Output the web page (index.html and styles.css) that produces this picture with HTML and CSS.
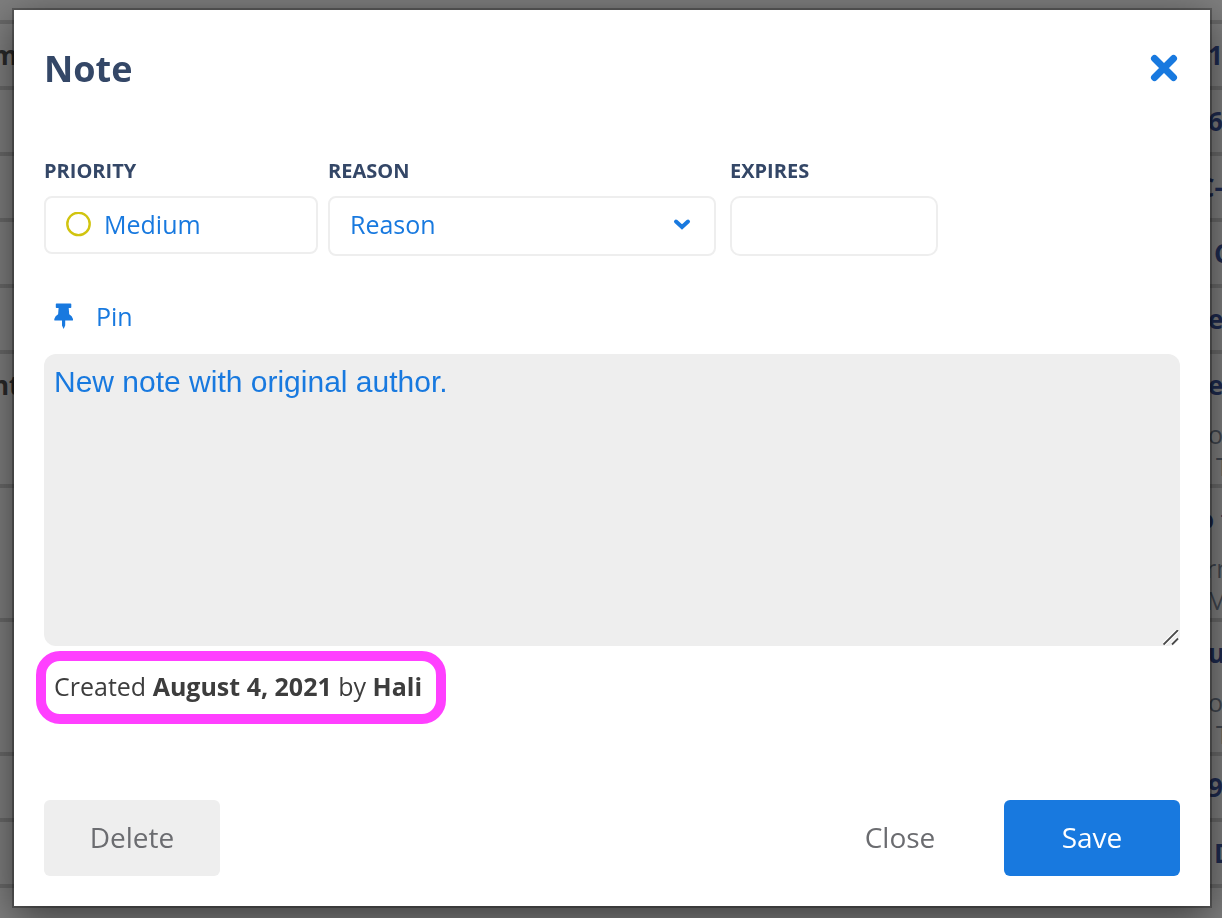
FILE: index.html
```html
<!DOCTYPE html>
<html lang="en">
<head>
<meta charset="utf-8">
<meta name="viewport" content="width=device-width, initial-scale=1">
<title>Note</title>
<link rel="stylesheet" href="styles.css">
</head>
<body>
<div class="backdrop-page" aria-hidden="true">
  <div class="row"><span class="row-label">m</span><div class="row-value near"><b>1</b></div></div>
  <div class="row"><div class="row-value near"><b>6</b></div></div>
  <div class="row"><div class="row-value"><b>C-</b></div></div>
  <div class="row"><div class="row-value far"><b>C</b></div></div>
  <div class="row"><div class="row-value near"><b>e</b></div></div>
  <div class="row tall"><span class="row-label">nt</span><div class="row-value near"><b>e</b><span>ou</span><span class="inset">T</span></div></div>
  <div class="row tall"><div class="row-value"><b>o t</b><span class="inset">rn</span><span class="inset">M</span></div></div>
  <div class="row tall"><div class="row-value near"><b>us</b><span>ou</span><span class="inset">T</span></div></div>
  <div class="row"><div class="row-value near"><b>9</b></div></div>
  <div class="row"><div class="row-value far"><b>D</b></div></div>
  <div class="row"></div>
</div>
<div class="overlay">
  <form class="modal" role="dialog" aria-labelledby="title">
    <header class="modal-header">
      <h1 class="title" id="title">Note</h1>
      <button class="icon-button" type="button" aria-label="Close dialog">
        <svg width="32" height="32" viewBox="0 0 32 32"><path d="M6.500 5.500 25.500 24.500M25.500 5.500 6.500 24.500" fill="none" stroke="currentColor" stroke-width="7" stroke-linecap="round"/></svg>
      </button>
    </header>
    <div class="fields">
      <div class="field priority">
        <label for="priority">PRIORITY</label>
        <button class="control priority-button" id="priority" type="button"><svg width="25" height="25" viewBox="0 0 25 25"><circle cx="12.500" cy="11.900" r="11.200" fill="none" stroke="#d1c40f" stroke-width="2.400"/></svg>Medium</button>
      </div>
      <div class="field reason">
        <label for="reason">REASON</label>
        <div class="select-wrap">
          <select class="control reason-select" id="reason"><option>Reason</option></select>
          <svg class="chevron" width="20" height="14" viewBox="0 0 20 14"><path d="M4 4.500 10 10 16 4.500" fill="none" stroke="currentColor" stroke-width="4" stroke-linecap="round"/></svg>
        </div>
      </div>
      <div class="field expires">
        <label for="expires">EXPIRES</label>
        <input class="control expires-input" id="expires" type="text">
      </div>
    </div>
    <button class="pin" type="button">
      <svg width="20" height="26" viewBox="0 0 20 26"><path d="M2.500 0.500H16.500Q17.300 .5 17.300 1.300V4.200Q17.300 5 16.500 5H14.700L15.200 11.200Q18.200 12.800 19 16V17Q19 17.600 18.300 17.600H11.200V22.500L9.600 26 8 22.500V17.600H1Q.3 17.600 .3 17V16Q1.100 12.800 4.100 11.200L4.600 5H2.500Q1.800 5 1.800 4.200V1.300Q1.800 .5 2.500 .5Z" fill="currentColor"/></svg>
      Pin
    </button>
    <div class="note-wrap">
      <textarea class="note" aria-label="Note text">New note with original author.</textarea>
      <svg class="grip" width="16" height="16" viewBox="0 0 16 16"><path d="M0.500 14.500 15 0M9 14.500 15 8.500" fill="none" stroke="#fff" stroke-width="4"/><path d="M0.500 14.500 15 0M9 14.500 15 8.500" fill="none" stroke="#4a4a4a" stroke-width="1.800"/></svg>
    </div>
    <p class="created">Created <strong>August 4, 2021</strong> by <strong>Hali</strong></p>
    <footer class="actions">
      <button class="button delete" type="button">Delete</button>
      <button class="button close" type="button">Close</button>
      <button class="button save" type="submit">Save</button>
    </footer>
  </form>
</div>
</body>
</html>
```
FILE: styles.css
```css
* { box-sizing: border-box; }
body {
  margin: 0;
  overflow: hidden;
  background: #7f7f7f;
  font-family: "Open Sans", sans-serif;
  font-size: 25px;
  color: #3d3d3d;
}
button, input, select { font: inherit; margin: 0; }
button, select { cursor: pointer; }

.backdrop-page { padding-top: 20px; }
.row {
  display: flex;
  height: 66px;
  border-top: 4px solid #6a6a6a;
  padding-top: 12px;
  line-height: 38px;
  font-size: 26px;
}
.row.tall { height: 134px; }
.row-label { margin-left: -8px; font-weight: 700; color: #2a2a2a; }
.row-value {
  display: flex;
  flex-direction: column;
  margin-left: auto;
  width: 24px;
  white-space: nowrap;
  line-height: 32px;
  font-size: 25px;
  color: #40464f;
}
.row-value b { line-height: 38px; font-size: 26px; color: #1e2b50; margin-bottom: 14px; }
.row-value.near { width: 14px; }
.row-value.far { width: 8px; }
.inset { padding-left: 8px; }

.overlay {
  position: fixed;
  inset: 0;
  display: flex;
  padding: 10px 12px 12px 14px;
}
.modal {
  flex: 1;
  display: flex;
  flex-direction: column;
  padding: 30px;
  background: #fff;
  box-shadow: 0 0 0 2px rgba(0, 0, 0, .28), 0 10px 40px rgba(0, 0, 0, .55);
}
.modal-header {
  display: flex;
  justify-content: space-between;
  align-items: center;
  height: 58px;
}
.title { margin: 0; font-size: 36px; line-height: 58px; font-weight: 700; color: #344767; }
.icon-button {
  display: flex;
  padding: 0;
  border: 0;
  background: none;
  color: #1879df;
}
.fields { display: flex; margin-top: 58px; }
.field { display: flex; flex-direction: column; }
.field label { margin-bottom: 10px; font-size: 20px; line-height: 30px; font-weight: 700; color: #344767; }
.priority { flex: 0 1 274px; margin-right: 10px; }
.reason { flex: 0 1 388px; margin-right: 14px; }
.expires { flex: 0 1 208px; }
.control {
  width: 100%;
  height: 60px;
  border: 2px solid #eee;
  border-radius: 8px;
  background: #fff;
  color: #1879df;
}
.priority-button { display: flex; align-items: center; gap: 13px; height: 58px; padding: 0 20px 2px; }
.select-wrap { position: relative; }
.reason-select { padding: 0 60px 4px 20px; appearance: none; }
.chevron { position: absolute; right: 24px; top: 21px; color: #1879df; pointer-events: none; }
.expires-input { border-radius: 10px; padding: 0 16px; }
.pin {
  display: flex;
  align-items: center;
  align-self: flex-start;
  gap: 22px;
  margin: 41px 0 19px;
  padding: 0 10px;
  border: 0;
  background: none;
  line-height: 38px;
  color: #1879df;
}
.note-wrap { position: relative; flex: 1; display: flex; min-height: 100px; }
.note {
  flex: 1;
  margin: 0;
  padding: 10px;
  border: 0;
  border-radius: 12px;
  background: #eee;
  color: #1879df;
  font: 30px/36px "Liberation Sans", Arial, sans-serif;
  resize: none;
}
.grip { position: absolute; right: 1px; bottom: 0; pointer-events: none; }
.created {
  align-self: flex-start;
  margin: 5px 0 76px -8px;
  padding: 6px 14px 9px 8px;
  border: 10px solid #ff40ff;
  border-radius: 24px;
  line-height: 38px;
}
.actions { display: flex; gap: 16px; }
.button {
  width: 176px;
  height: 76px;
  padding: 0 0 2px;
  border: 0;
  border-radius: 6px;
  background: none;
  font-size: 28px;
  color: #6b6c70;
}
.delete { margin-right: auto; background: #eee; }
.save { background: #1879df; color: #fff; }
```
